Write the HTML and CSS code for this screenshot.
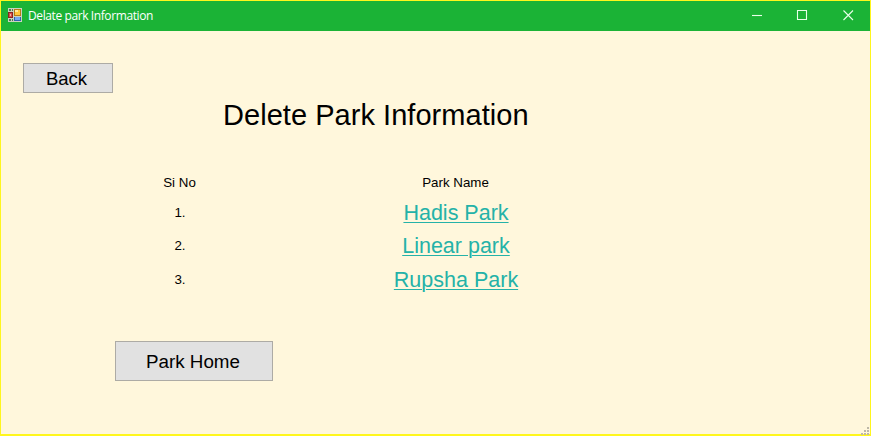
FILE: index.html
```html
<!DOCTYPE html>
<html lang="en">
<head>
<meta charset="utf-8">
<title>Delate park Information</title>
<link rel="stylesheet" href="styles.css">
</head>
<body>
<div class="window">
  <header class="titlebar">
    <svg class="app-icon" width="14" height="14" viewBox="0 0 14 14" shape-rendering="crispEdges">
      <path fill="#c9d3bd" d="M0 0h14v14H0z"/>
      <path fill="#517856" d="M1 1h2v2H1zM4 1h1v2H4z"/>
      <path fill="#8b2420" d="M0 4h5v6H0z"/>
      <path fill="#d84b48" d="M1 5h3v4H1z"/>
      <path fill="#f4b5a4" d="M2 6h1v2H2z"/>
      <path fill="#b77a16" d="M6 1h7v7H6z"/>
      <path fill="#ffc83c" d="M7 2h5v5H7z"/>
      <path fill="#ffeaa0" d="M7 2h3v2H7z"/>
      <path fill="#3263ad" d="M6 9h7v4H6z"/>
      <path fill="#75a9ee" d="M7 9h5v3H7z"/>
      <path fill="#517856" d="M1 11h2v2H1zM4 11h1v2H4z"/>
    </svg>
    <span class="title">Delate park Information</span>
    <div class="controls">
      <svg width="46" height="30" viewBox="0 0 46 30"><path d="M18 14.5h10"/></svg>
      <svg width="46" height="30" viewBox="0 0 46 30"><path d="M17.5 9.5h9v9h-9z"/></svg>
      <svg width="46" height="30" viewBox="0 0 46 30"><path d="M17.5 9.5l9.5 9.5M27 9.5L17.5 19"/></svg>
    </div>
  </header>
  <main class="form">
    <button class="button back">Back</button>
    <h1 class="heading">Delete Park Information</h1>
    <div class="parks">
      <span class="label">Si No</span><span class="label">Park Name</span>
      <span class="number">1.</span><a class="link" href="#">Hadis Park</a>
      <span class="number">2.</span><a class="link" href="#">Linear park</a>
      <span class="number">3.</span><a class="link" href="#">Rupsha Park</a>
    </div>
    <button class="button home">Park Home</button>
  </main>
  <svg class="grip" width="8" height="8" viewBox="0 0 8 8" shape-rendering="crispEdges"><path fill="#bdb7a8" d="M6 0h2v2H6zM3 3h2v2H3zM6 3h2v2H6zM0 6h2v2H0zM3 6h2v2H3zM6 6h2v2H6z"/></svg>
</div>
</body>
</html>
```
FILE: styles.css
```css
* { box-sizing: border-box; }
html { background: #fff8dc; }
body { margin: 0; font-family: "Liberation Sans", Arial, sans-serif; color: #000; }
.window {
  position: relative;
  width: 871px;
  height: 436px;
  border: 1px solid #fff61c;
  border-bottom-width: 2px;
  background: #fff7dc;
}
.titlebar {
  display: flex;
  align-items: center;
  height: 30px;
  padding-left: 7px;
  background: #1bb336;
  color: #fff;
  overflow: hidden;
}
.app-icon { margin-bottom: 2px; }
.title {
  margin-left: 6px;
  font: 12px/28px "Open Sans", "Noto Sans", sans-serif;
  letter-spacing: -0.4px;
  white-space: nowrap;
}
.controls { display: flex; margin: 0 -2px 0 auto; }
.controls svg { display: block; fill: none; stroke: #e9ffe9; stroke-width: 1.1; }
.form { display: flex; flex-direction: column; align-items: flex-start; padding-top: 32px; }
.button {
  padding: 0;
  border: 1px solid #adaba5;
  border-radius: 0;
  background: #e1e1e1;
  color: #000;
  font-family: inherit;
  white-space: nowrap;
}
.back { width: 90px; height: 30px; margin-left: 22px; padding: 1px 3px 0 0; font-size: 18.5px; }
.heading {
  margin: 4px 0 0 222px;
  font-size: 29px;
  line-height: 36px;
  font-weight: 400;
  letter-spacing: 0.04px;
  white-space: nowrap;
}
.parks {
  display: grid;
  grid-template-columns: 200px 352px;
  grid-template-rows: 30px 32px 34px 34px;
  place-items: center;
  margin: 34px 0 0 79px;
  white-space: nowrap;
}
.label { font-size: 13.33px; position: relative; left: -0.5px; }
.number { font-size: 13.33px; padding-bottom: 2px; }
.link { color: #24b2a8; font-size: 21.5px; text-underline-offset: 2px; text-decoration-thickness: 1px; }
.home { width: 158px; height: 40px; margin: 44px 0 0 114px; padding: 1px 2px 0 0; font-size: 18.8px; }
.grip { position: absolute; right: 1px; bottom: -1px; }
```
